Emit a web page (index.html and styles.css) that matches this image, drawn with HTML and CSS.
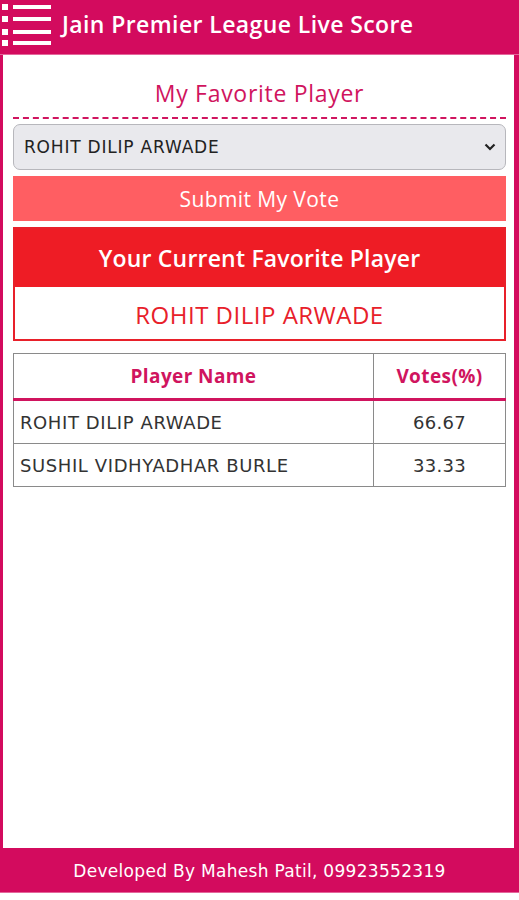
FILE: index.html
```html
<!DOCTYPE html>
<html lang="en">
<head>
  <meta charset="UTF-8" />
  <meta name="viewport" content="width=device-width, initial-scale=1.0"/>
  <title>Jain Premier League Live Score</title>
  <link rel="stylesheet" href="styles.css">
</head>
<body>

  <!-- top bar -->
  <div class="topbar">
    <svg class="menu-icon" width="52" height="50" viewBox="0 0 52 50">
      <g fill="#fff">
        <rect x="2" y="4" width="6" height="6"/>
        <rect x="13" y="5" width="38" height="4"/>
        <rect x="2" y="16" width="6" height="6"/>
        <rect x="13" y="17" width="38" height="4"/>
        <rect x="2" y="29" width="6" height="6"/>
        <rect x="13" y="30" width="38" height="4"/>
        <rect x="2" y="40" width="6" height="6"/>
        <rect x="13" y="41" width="38" height="4"/>
      </g>
    </svg>
    <h1>Jain Premier League Live Score</h1>
  </div>

  <div class="content">
    <h2 class="title">My Favorite Player</h2>

    <div class="select-wrap">
      <select id="playerSelect">
        <option>ROHIT DILIP ARWADE</option>
        <option>SUSHIL VIDHYADHAR BURLE</option>
      </select>
      <svg class="chevron" width="12" height="8" viewBox="0 0 12 8">
        <path d="M1.5 1.5 L6 6 L10.5 1.5" fill="none" stroke="#222" stroke-width="2.2"/>
      </svg>
    </div>

    <button class="vote-btn">Submit My Vote</button>

    <div class="current">
      <div class="current-head">Your Current Favorite Player</div>
      <div class="current-name">ROHIT DILIP ARWADE</div>
    </div>

    <table class="votes">
      <thead>
        <tr>
          <th>Player Name</th>
          <th class="col-votes">Votes(%)</th>
        </tr>
      </thead>
      <tbody>
        <tr>
          <td>ROHIT DILIP ARWADE</td>
          <td class="num">66.67</td>
        </tr>
        <tr>
          <td>SUSHIL VIDHYADHAR BURLE</td>
          <td class="num">33.33</td>
        </tr>
      </tbody>
    </table>
  </div>

  <div class="footer">Developed By Mahesh Patil, 09923552319</div>

</body>
</html>
```

FILE: styles.css
```css
body {
  margin: 0;
  font-family: "Open Sans", "Noto Sans", sans-serif;
  background-color: #FFFFFF;
  color: #333;
}
.topbar {
  display: flex;
  align-items: center;
  height: 55px;
  background-color: #D30B5E;
  border-bottom: 1px solid #E4679B;
  box-sizing: border-box;
}
.menu-icon {
  flex: none;
  margin-top: -4px;
}
.topbar h1 {
  margin: -6px 0 0 10px;
  font-size: 23px;
  font-weight: 600;
  color: #FFFFFF;
  letter-spacing: 0.4px;
}
.content {
  height: 793px;
  box-sizing: border-box;
  border-left: 3px solid #D30B5E;
  border-right: 5px solid #D30B5E;
  padding: 0 8px 0 10px;
}
.title {
  margin: 0;
  padding: 23px 0 8px;
  line-height: 31px;
  text-align: center;
  font-size: 23px;
  font-weight: 400;
  letter-spacing: 0.7px;
  color: #D0145E;
  border-bottom: 2px dashed #D0145E;
}
/* select with custom arrow */
.select-wrap {
  position: relative;
  margin-top: 5px;
}
.select-wrap select {
  width: 100%;
  height: 46px;
  padding: 0 10px;
  font-family: Tahoma, "DejaVu Sans", sans-serif;
  font-size: 17px;
  letter-spacing: 0.8px;
  color: #222;
  background-color: #E9E9ED;
  border: 1.5px solid #B7B7BC;
  border-radius: 7px;
  appearance: none;
  -webkit-appearance: none;
}
.chevron {
  position: absolute;
  right: 10px;
  top: 19px;
  pointer-events: none;
}
.vote-btn {
  display: block;
  width: 100%;
  height: 45px;
  margin-top: 6px;
  font-family: "Open Sans", "Noto Sans", sans-serif;
  font-size: 21px;
  letter-spacing: 0.4px;
  color: #FFFFFF;
  background-color: #FF5E62;
  border: none;
  cursor: pointer;
}
.current {
  margin-top: 6px;
  border: 2px solid #E8202A;
  text-align: center;
}
.current-head {
  height: 58px;
  line-height: 58px;
  background-color: #EE1C25;
  color: #FFFFFF;
  font-size: 23px;
  font-weight: 600;
  letter-spacing: 0.2px;
}
.current-name {
  height: 52px;
  line-height: 55px;
  color: #E8202A;
  font-size: 24px;
  letter-spacing: 0.5px;
}
/* votes table */
.votes {
  width: 100%;
  margin-top: 12px;
  border-collapse: collapse;
  font-family: Tahoma, "DejaVu Sans", sans-serif;
  font-size: 18px;
  letter-spacing: 0.6px;
  color: #333;
}
.votes th,
.votes td {
  border: 1px solid #8A8A8A;
}
.votes th {
  height: 42px;
  font-family: "Open Sans", "Noto Sans", sans-serif;
  color: #D0145E;
  font-size: 19px;
  font-weight: bold;
  letter-spacing: 0.4px;
  border-bottom: 3px solid #D0145E;
}
.votes td {
  height: 42px;
  padding: 0 6px;
}
.votes .num {
  letter-spacing: 0.3px;
}
.votes .col-votes {
  width: 129px;
}
.votes .num {
  text-align: center;
}
.footer {
  height: 44px;
  line-height: 46px;
  background-color: #D30B5E;
  border-bottom: 1px solid #E4679B;
  color: #FFFFFF;
  text-align: center;
  font-family: Tahoma, "DejaVu Sans", sans-serif;
  font-size: 17px;
  letter-spacing: 0.3px;
}
```
